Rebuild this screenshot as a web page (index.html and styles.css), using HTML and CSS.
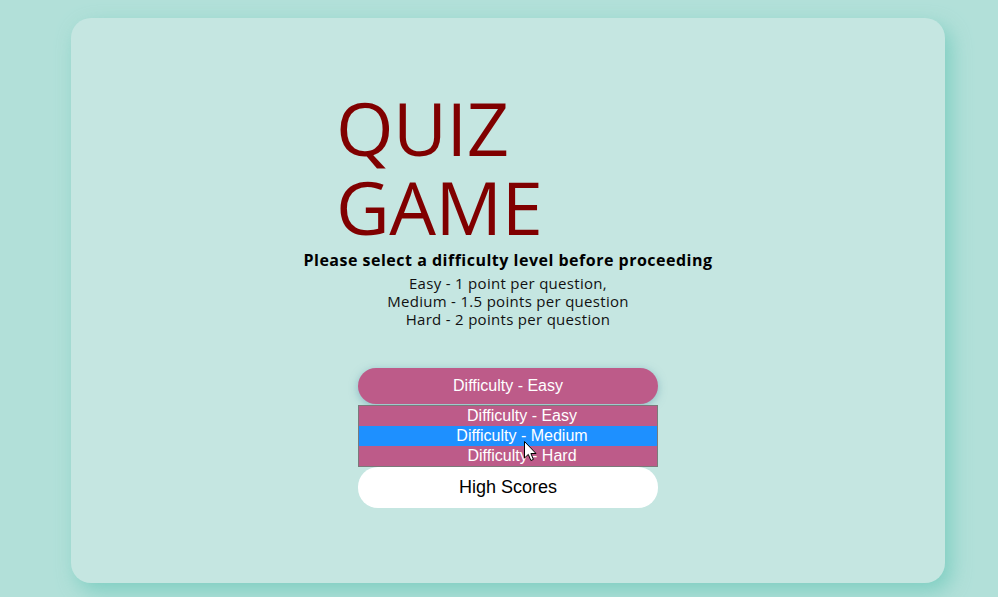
FILE: index.html
```html
<!DOCTYPE html>
<html>
<head>
<meta charset="utf-8">
<link rel="stylesheet" href="styles.css">
</head>
<body>
<main class="card">
  <h1 class="title">QUIZ GAME</h1>
  <p class="lead">Please select a difficulty level before proceeding</p>
  <p class="points">Easy - 1 point per question,<br>Medium - 1.5 points per question<br>Hard - 2 points per question</p>
  <div class="controls">
    <div class="select">Difficulty - Easy</div>
    <ul class="options">
      <li class="option">Difficulty - Easy</li>
      <li class="option active">Difficulty - Medium</li>
      <li class="option">Difficulty - Hard</li>
      <svg class="cursor" width="13" height="21" viewBox="0 0 13 21"><path d="M0.5 0.5 L0.5 17 L4.3 13.4 L6.9 19.5 L9.4 18.4 L6.9 12.5 L12 12.5 Z" fill="#fff" stroke="#000" stroke-width="1"/></svg>
    </ul>
    <button class="scores">High Scores</button>
  </div>
</main>
</body>
</html>
```
FILE: styles.css
```css
html, body {
  margin: 0;
  padding: 0;
}
body {
  background: #b2e0d9;
  width: 998px;
  height: 597px;
  overflow: hidden;
}
.card {
  box-sizing: border-box;
  margin: 18px 0 0 71px;
  width: 874px;
  height: 565px;
  background: #c5e6e1;
  border-radius: 20px;
  box-shadow: 6px 8px 20px rgba(110, 200, 185, 0.75);
  display: flex;
  flex-direction: column;
  align-items: center;
  padding-top: 70px;
  font-family: "Open Sans", sans-serif;
}
.title {
  width: 340px;
  margin: 0 0 0 -4px;
  font-weight: 400;
  font-size: 74px;
  line-height: 79px;
  color: #800000;
  letter-spacing: -0.5px;
}
.lead {
  margin: 4px 0 0;
  font-size: 16px;
  font-weight: 700;
  color: #000;
  line-height: 20px;
  letter-spacing: 0.5px;
}
.points {
  margin: 4px 0 0;
  font-size: 15px;
  line-height: 18px;
  text-align: center;
  color: #111;
  letter-spacing: 0.3px;
}
.controls {
  margin-top: 40px;
  width: 300px;
  display: flex;
  flex-direction: column;
  font-family: "Liberation Sans", Arial, sans-serif;
}
.select {
  height: 36px;
  line-height: 36px;
  border-radius: 18px;
  background: #bd5b89;
  color: #fff;
  text-align: center;
  font-size: 16px;
  box-shadow: 0 2px 8px rgba(90, 150, 170, 0.55);
}
.options {
  position: relative;
  list-style: none;
  margin: 1px 0 0;
  padding: 0;
  border: 1px solid #7a7a7a;
  background: #bd5b89;
}
.option {
  height: 20px;
  line-height: 19px;
  text-align: center;
  padding-left: 28px;
  color: #fff;
  font-size: 16px;
}
.option.active {
  background: #1e90ff;
}
.cursor {
  position: absolute;
  left: 165px;
  top: 35px;
}
.scores {
  height: 41px;
  border: none;
  border-radius: 20px;
  background: #fff;
  color: #000;
  font-family: "Liberation Sans", Arial, sans-serif;
  font-size: 18px;
  padding: 0;
}
```
